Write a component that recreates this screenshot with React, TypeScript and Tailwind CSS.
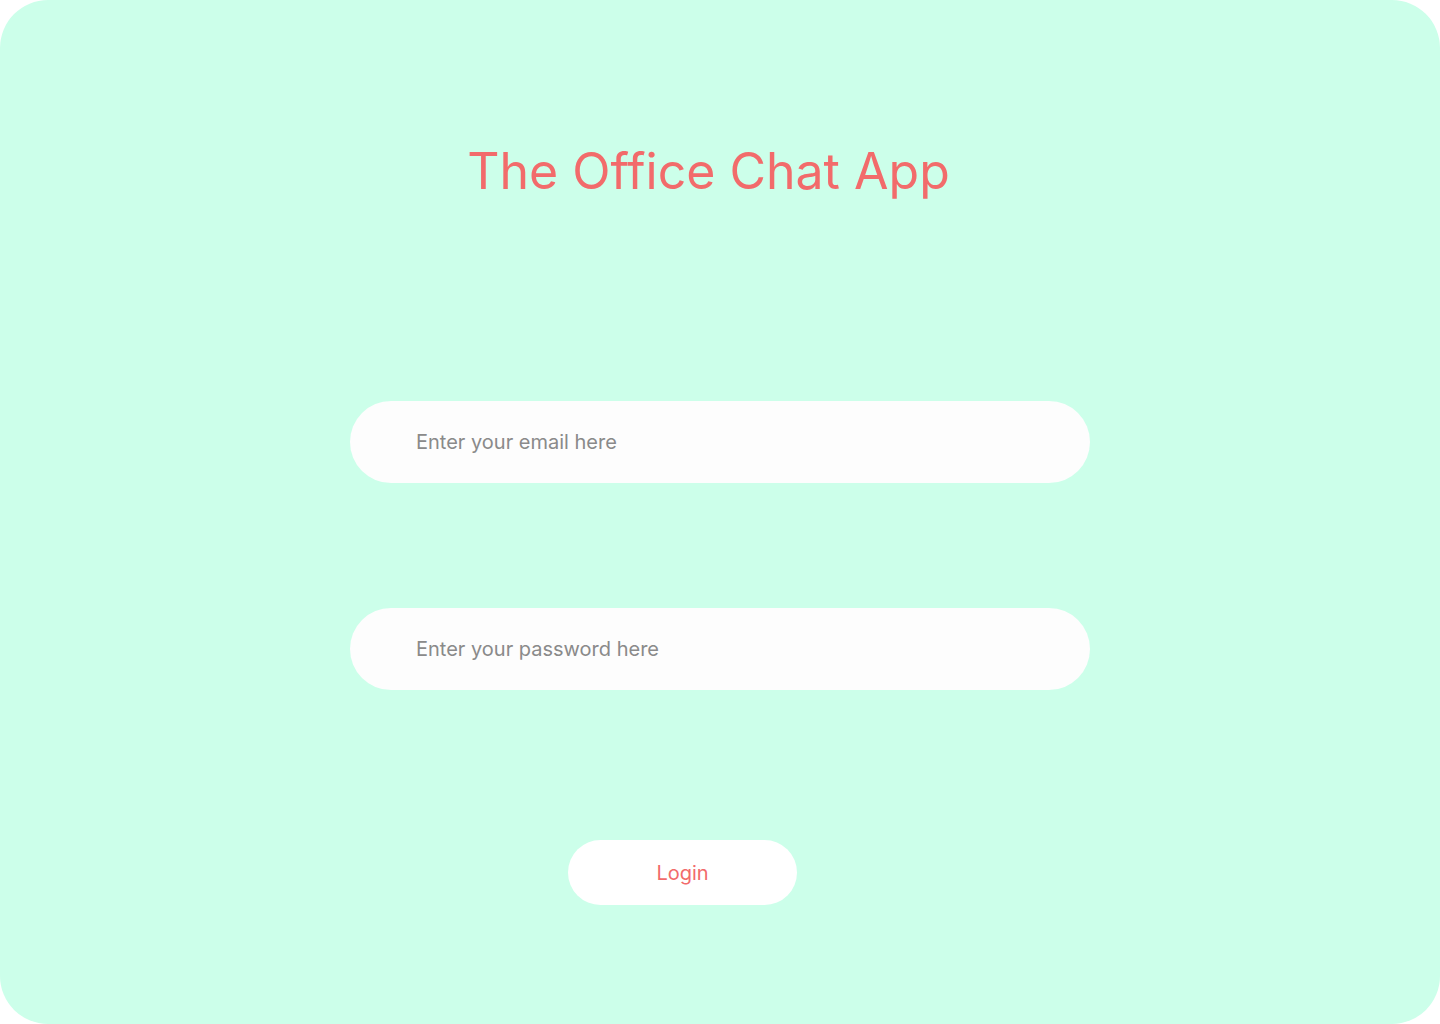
import { useState } from 'react'

export default function App() {
  const [email, setEmail] = useState('')
  const [password, setPassword] = useState('')

  return (
    <div className="w-[1440px] h-[1024px] bg-white" style={{ fontFamily: 'Inter, "Liberation Sans", sans-serif' }}>
      <div className="w-full h-full rounded-[48px] bg-[#ccffea] flex flex-col">
        {/* Title */}
        <div className="flex justify-center pt-[141px] pr-[23px]">
          <h1 className="text-[50px] leading-[60px] font-normal text-[#f26b6b]">The Office Chat App</h1>
        </div>

        {/* Form */}
        <form className="flex flex-col px-[350px] mt-[200px]" onSubmit={e => e.preventDefault()}>
          <input
            type="email"
            value={email}
            onChange={e => setEmail(e.target.value)}
            placeholder="Enter your email here"
            className="h-[82px] w-[740px] rounded-full bg-[#fdfdfd] pl-[66px] text-[20px] text-[#444] placeholder:text-[#8a8a8a] outline-none"
          />
          <input
            type="password"
            value={password}
            onChange={e => setPassword(e.target.value)}
            placeholder="Enter your password here"
            className="mt-[125px] h-[82px] w-[740px] rounded-full bg-[#fdfdfd] pl-[66px] text-[20px] text-[#444] placeholder:text-[#8a8a8a] outline-none"
          />
          <button
            type="submit"
            className="mt-[150px] ml-[218px] h-[65px] w-[229px] rounded-full bg-white text-[20px] text-[#f26b6b]"
          >
            Login
          </button>
        </form>
      </div>
    </div>
  )
}
